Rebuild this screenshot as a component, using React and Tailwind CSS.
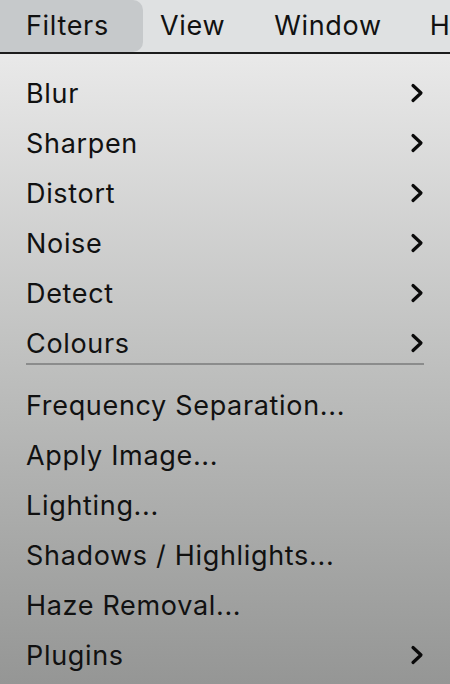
import React from 'react';

const GROUP_ONE = ['Blur', 'Sharpen', 'Distort', 'Noise', 'Detect', 'Colours'];
const GROUP_TWO = [
  { label: 'Frequency Separation...' },
  { label: 'Apply Image...' },
  { label: 'Lighting...' },
  { label: 'Shadows / Highlights...' },
  { label: 'Haze Removal...' },
  { label: 'Plugins', sub: true },
];

function Chevron() {
  return (
    <svg width="14" height="20" viewBox="0 0 14 20" className="shrink-0">
      <path d="M3 2.5 L11 10 L3 17.5" fill="none" stroke="#0a0a0a" strokeWidth="3.2" strokeLinecap="round" strokeLinejoin="round" />
    </svg>
  );
}

function MenuRow({ label, sub }) {
  return (
    <div className="h-[50px] flex items-center justify-between pl-[26px] pr-[26px]">
      <span className="leading-none">{label}</span>
      {sub && <Chevron />}
    </div>
  );
}

export default function App() {
  return (
    <div className="w-[450px] h-[684px] overflow-hidden flex flex-col text-[#111] text-[27px] tracking-[0.025em] font-['Inter',sans-serif]">
      {/* menu bar */}
      <div className="h-[54px] shrink-0 bg-[#dfe1e2] flex items-stretch border-b-2 border-[#1c1c1c] whitespace-nowrap">
        <div className="w-[143px] shrink-0 bg-[#c6c9cb] rounded-r-[10px] flex items-center pl-[26px]">Filters</div>
        <div className="flex items-center pl-[17px]">View</div>
        <div className="flex items-center pl-[49px]">Window</div>
        <div className="flex items-center pl-[48px]">H</div>
      </div>

      {/* dropdown */}
      <div className="flex-1 bg-gradient-to-b from-[#e9e9e9] via-[#bebfbe] to-[#959695] pt-[14px]">
        {GROUP_ONE.map((l) => (
          <MenuRow key={l} label={l} sub />
        ))}
        <div className="mx-[26px] -mt-[5px] h-[2px] bg-[#8b8c8c]" />
        <div className="h-[15px]" />
        {GROUP_TWO.map((item) => (
          <MenuRow key={item.label} label={item.label} sub={item.sub} />
        ))}
      </div>
    </div>
  );
}
